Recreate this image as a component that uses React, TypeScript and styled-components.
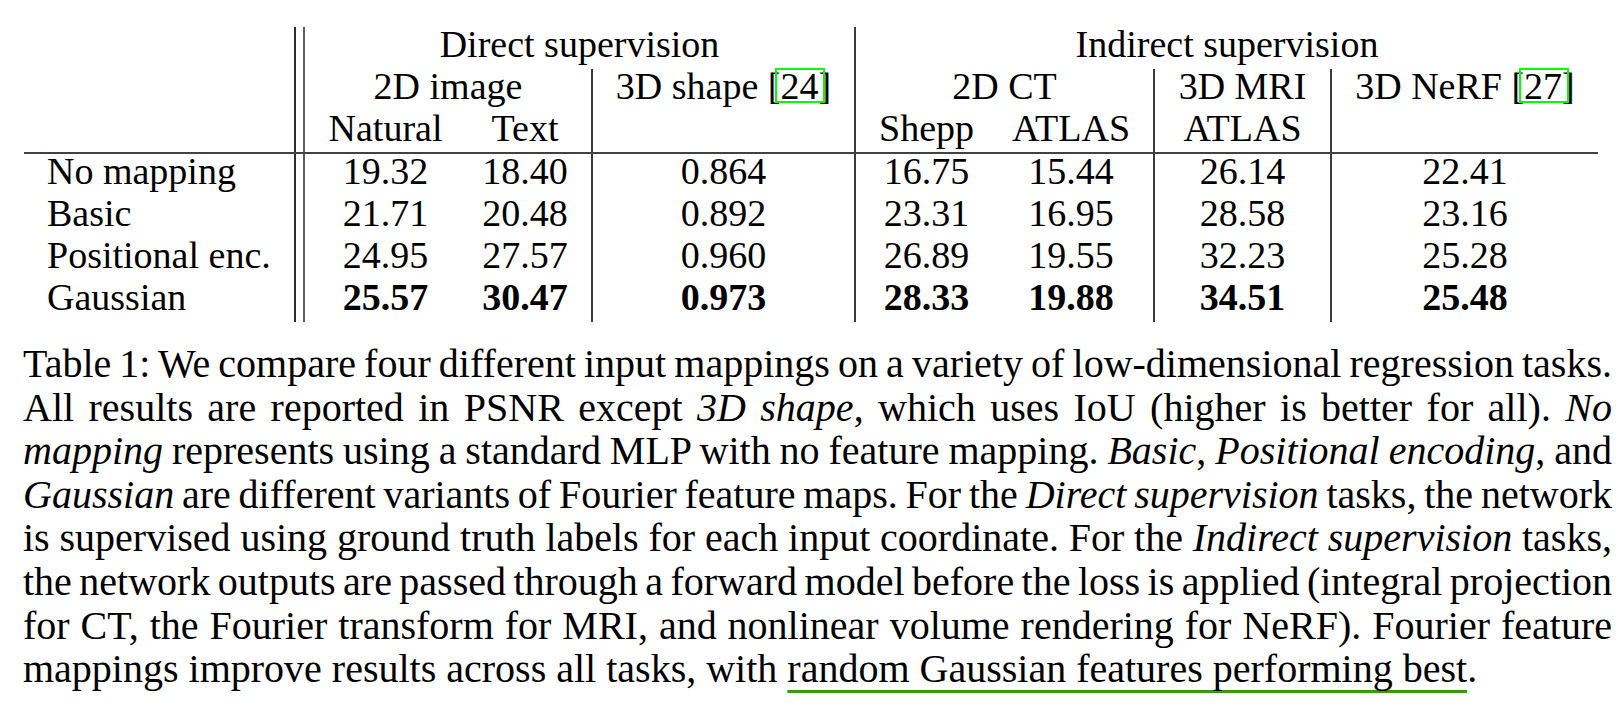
import React from "react";
import styled, { createGlobalStyle } from "styled-components";

const Global = createGlobalStyle`
  html, body { margin: 0; padding: 0; background: #ffffff; }
  body {
    font-family: "Liberation Serif", "Times New Roman", Times, serif;
    color: #000;
  }
`;

const Page = styled.div`
  width: 1623px;
  height: 707px;
  box-sizing: border-box;
  padding: 27px 0 0 23px;
  display: flex;
  flex-direction: column;
  overflow: hidden;
  background: #fff;
`;

const Table = styled.div`
  display: grid;
  margin-left: 1px;
  width: max-content;
  grid-template-columns: 270px 2px 7px 2px 161px 125px 2px 261px 2px 141px 156px 2px 175px 2px 266px;
  grid-template-rows: 42px 42px 41px 2px repeat(4, 42px);
  font-size: 38px;
`;

const Cell = styled.div<{
  $col: string;
  $row: number;
  $align?: "left" | "center";
  $bold?: boolean;
  $padL?: number;
  $padR?: number;
}>`
  grid-column: ${(p) => p.$col};
  grid-row: ${(p) => p.$row};
  line-height: 34px;
  white-space: nowrap;
  text-align: ${(p) => p.$align ?? "center"};
  font-weight: ${(p) => (p.$bold ? 700 : 400)};
  padding-left: ${(p) => p.$padL ?? 0}px;
  padding-right: ${(p) => p.$padR ?? 0}px;
`;

const VRule = styled.div<{ $col: number; $from: number; $tone?: string }>`
  grid-column: ${(p) => p.$col};
  grid-row: ${(p) => p.$from} / -1;
  background: ${(p) => p.$tone ?? "#3a3a3a"};
`;

const HRule = styled.div`
  grid-column: 1 / -1;
  grid-row: 4;
  background: #424242;
`;

const Ref = styled.span`
  position: relative;
  &::after {
    content: "";
    position: absolute;
    left: -5px;
    right: -7px;
    top: 3px;
    height: 35px;
    box-sizing: border-box;
    border: 2px solid #00ff00;
  }
`;

const Caption = styled.div`
  margin-top: 20px;
  width: 1589px;
  font-size: 40px;
  line-height: 43.6px;
`;

const Line = styled.div<{ $last?: boolean }>`
  text-align: justify;
  text-align-last: ${(p) => (p.$last ? "left" : "justify")};
  word-spacing: ${(p) => (p.$last ? "0" : "-5px")};
`;

const Em = styled.i`
  font-style: italic;
`;

const Link = styled.span`
  text-decoration: underline;
  text-decoration-color: #359a0c;
  text-decoration-thickness: 3px;
  text-underline-offset: 8px;
  text-decoration-skip-ink: none;
`;

type Row = { label: string; vals: string[]; bold?: boolean };

const rows: Row[] = [
  { label: "No mapping", vals: ["19.32", "18.40", "0.864", "16.75", "15.44", "26.14", "22.41"] },
  { label: "Basic", vals: ["21.71", "20.48", "0.892", "23.31", "16.95", "28.58", "23.16"] },
  { label: "Positional enc.", vals: ["24.95", "27.57", "0.960", "26.89", "19.55", "32.23", "25.28"] },
  { label: "Gaussian", vals: ["25.57", "30.47", "0.973", "28.33", "19.88", "34.51", "25.48"], bold: true },
];

// grid column of each value, and right padding that matches the reference centres
const valueCols: { col: string; padR?: number }[] = [
  { col: "5" },
  { col: "6", padR: 7 },
  { col: "8" },
  { col: "10" },
  { col: "11", padR: 8 },
  { col: "13" },
  { col: "15" },
];

export default function App() {
  return (
    <>
      <Global />
      <Page>
        <Table>
          <Cell $col="5 / 9" $row={1}>Direct supervision</Cell>
          <Cell $col="10 / 16" $row={1}>Indirect supervision</Cell>

          <Cell $col="5 / 7" $row={2}>2D image</Cell>
          <Cell $col="8" $row={2}>
            3D shape [<Ref>24</Ref>]
          </Cell>
          <Cell $col="10 / 12" $row={2}>2D CT</Cell>
          <Cell $col="13" $row={2}>3D MRI</Cell>
          <Cell $col="15" $row={2}>
            3D NeRF [<Ref>27</Ref>]
          </Cell>

          <Cell $col="5" $row={3}>Natural</Cell>
          <Cell $col="6" $row={3} $padR={7}>Text</Cell>
          <Cell $col="10" $row={3}>Shepp</Cell>
          <Cell $col="11" $row={3} $padR={8}>ATLAS</Cell>
          <Cell $col="13" $row={3}>ATLAS</Cell>

          {rows.map((r, i) => (
            <React.Fragment key={r.label}>
              <Cell $col="1" $row={5 + i} $align="left" $padL={23}>
                {r.label}
              </Cell>
              {r.vals.map((v, j) => (
                <Cell
                  key={j}
                  $col={valueCols[j].col}
                  $row={5 + i}
                  $bold={r.bold}
                  $padR={valueCols[j].padR}
                >
                  {v}
                </Cell>
              ))}
            </React.Fragment>
          ))}

          <VRule $col={2} $from={1} $tone="#2e2e2e" />
          <VRule $col={4} $from={1} $tone="#5e5e5e" />
          <VRule $col={7} $from={2} />
          <VRule $col={9} $from={1} />
          <VRule $col={12} $from={2} />
          <VRule $col={14} $from={2} />
          <HRule />
        </Table>

        <Caption>
          <Line>
            Table 1: We compare four different input mappings on a variety of low-dimensional regression tasks.
          </Line>
          <Line>
            All results are reported in PSNR except <Em>3D shape</Em>, which uses IoU (higher is better for all).{" "}
            <Em>No</Em>
          </Line>
          <Line>
            <Em>mapping</Em> represents using a standard MLP with no feature mapping. <Em>Basic</Em>,{" "}
            <Em>Positional encoding</Em>, and
          </Line>
          <Line>
            <Em>Gaussian</Em> are different variants of Fourier feature maps. For the <Em>Direct supervision</Em>{" "}
            tasks, the network
          </Line>
          <Line>
            is supervised using ground truth labels for each input coordinate. For the{" "}
            <Em>Indirect supervision</Em> tasks,
          </Line>
          <Line>
            the network outputs are passed through a forward model before the loss is applied (integral projection
          </Line>
          <Line>
            for CT, the Fourier transform for MRI, and nonlinear volume rendering for NeRF). Fourier feature
          </Line>
          <Line $last>
            mappings improve results across all tasks, with{" "}
            <Link>random Gaussian features performing best</Link>.
          </Line>
        </Caption>
      </Page>
    </>
  );
}
